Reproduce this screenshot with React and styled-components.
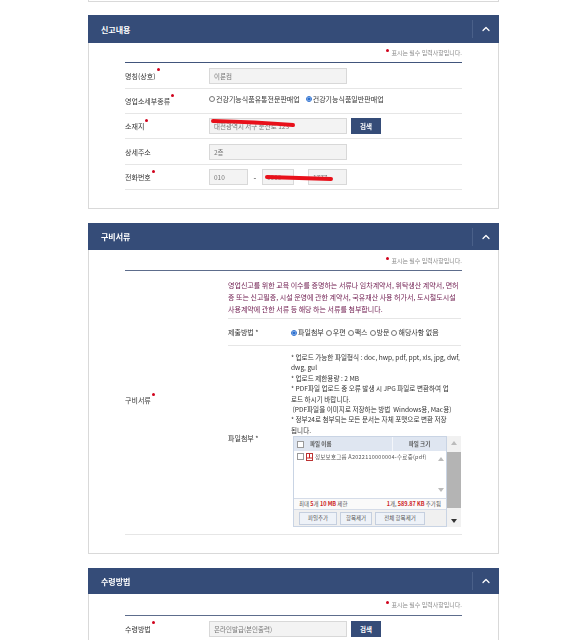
import styled, { createGlobalStyle } from "styled-components";
import { ChevronUp } from "lucide-react";

const Global = createGlobalStyle`
  html, body { margin: 0; padding: 0; background: #fff; overflow: hidden; }
  body { font-family: "Noto Sans CJK KR", "Noto Sans", sans-serif; color: #333; }
  input { font-family: inherit; }
`;

const Page = styled.div`
  width: 411px;
  height: 640px;
  margin-left: 88px;
  overflow: hidden;
  filter: blur(0.4px);
`;

const TopStub = styled.div`
  height: 1px;
  border: 1px solid #d9d9d9;
  border-top: 0;
  margin-bottom: 13px;
`;

const Panel = styled.section`
  border: 1px solid #d9d9d9;
  border-top: 0;
  margin-bottom: 14px;
  height: ${(p) => p.$height}px;
  box-sizing: border-box;
`;

const PanelHead = styled.div`
  height: ${(p) => p.$h || 28}px;
  margin: 0 -1px;
  background: #354c78;
  display: flex;
  align-items: center;
  justify-content: space-between;
  color: #fff;
  font-size: 8px;
  font-weight: 700;
  padding-left: 13px;
`;

const Toggle = styled.div`
  width: 26px;
  height: 18px;
  border-left: 1px solid #4a6089;
  display: flex;
  align-items: center;
  justify-content: center;
`;

const Inner = styled.div`
  position: relative;
  margin: 0 36px;
`;

const Note = styled.div`
  height: ${(p) => p.$h || 19}px;
  display: flex;
  justify-content: flex-end;
  align-items: center;
  font-size: 6px;
  color: #8a8a8a;
  border-bottom: ${(p) => (p.$soft ? "1px solid #5d6d8c" : "1px solid #41557c")};
`;

const Star = styled.i`
  display: inline-block;
  width: 3px;
  height: 3px;
  border-radius: 50%;
  background: #d0021b;
  margin: 0 2px ${(p) => (p.$raised ? 12 : 4)}px 1px;
`;

const Row = styled.div`
  display: flex;
  align-items: center;
  min-height: ${(p) => p.$h || 25}px;
  box-sizing: border-box;
  border-bottom: 1px solid #e6e6e6;
`;

const Label = styled.div`
  width: 84px;
  flex: none;
  display: flex;
  align-items: center;
  margin-bottom: ${(p) => p.$lift || 0}px;
  font-size: 7px;
  color: #333;
`;

const Value = styled.div`
  display: flex;
  align-items: center;
  margin-bottom: ${(p) => p.$lift || 0}px;
  font-size: 7px;
  color: #333;
`;

const Field = styled.input`
  box-sizing: border-box;
  width: ${(p) => p.$w || 138}px;
  height: 16px;
  padding: 0 4px;
  border: 1px solid #d8d8d8;
  background: #f3f3f3;
  font-size: 6.5px;
  color: #777;
  outline: 0;
`;

const SearchBtn = styled.button`
  width: 30px;
  height: 16px;
  margin-left: 4px;
  padding: 0;
  border: 0;
  background: #354c78;
  color: #fff;
  font-family: inherit;
  font-size: 6.5px;
  font-weight: 700;
`;

const Dash = styled.span`
  width: 14px;
  text-align: center;
  font-size: 8px;
`;

const Radio = styled.input.attrs({ type: "radio" })`
  width: 6px;
  height: 6px;
  margin: 1px 1px 0 0;
  accent-color: #2a6fd0;
`;

const RadioText = styled.span`
  margin-right: ${(p) => p.$mr || 0}px;
  white-space: nowrap;
  color: #333;
`;

const Scribble = styled.svg`
  position: absolute;
  left: 0;
  top: 0;
  pointer-events: none;
`;

const DocsGrid = styled.div`
  display: flex;
  align-items: center;
  border-bottom: 1px solid #e6e6e6;
`;

const DocsBody = styled.div`
  width: 233px;
  margin-left: 19px;
`;

const Guide = styled.p`
  margin: 0;
  padding: 8px 0 3px;
  font-size: 7px;
  line-height: 12px;
  white-space: nowrap;
  color: #6e1b4e;
  border-bottom: 1px solid #e6e6e6;
`;

const SubRow = styled.div`
  display: flex;
  align-items: center;
  min-height: ${(p) => p.$h}px;
  border-top: ${(p) => (p.$line ? "1px solid #e6e6e6" : 0)};
`;

const SubLabel = styled.div`
  width: 63px;
  flex: none;
  margin-bottom: ${(p) => p.$lift || 0}px;
  font-size: 7px;
  color: #333;
`;

const UploadCol = styled.div`
  width: 170px;
  padding-top: 6px;
`;

const Rules = styled.div`
  font-size: 6.6px;
  line-height: 10.4px;
  white-space: nowrap;
  color: #333;
`;

const Uploader = styled.div`
  display: flex;
  width: 168px;
  height: 91px;
  margin: 1px 0 7px 2px;
`;

const UpBox = styled.div`
  width: 154px;
  border: 1px solid #c9d4e4;
  box-sizing: border-box;
  display: flex;
  flex-direction: column;
  font-size: 5.5px;
  color: #555;
`;

const UpHead = styled.div`
  height: 14px;
  display: grid;
  grid-template-columns: 12px 86px 1fr;
  align-items: center;
  background: #dfe6f1;
  font-weight: 700;
`;

const HeadCell = styled.div`
  height: 100%;
  display: flex;
  align-items: center;
  justify-content: ${(p) => (p.$center ? "center" : "flex-start")};
  padding-left: ${(p) => (p.$center ? 0 : 4)}px;
  border-left: ${(p) => (p.$line ? "1px solid #f4f6fa" : 0)};
`;

const Check = styled.span`
  width: 5px;
  height: 5px;
  margin-left: 3px;
  border: 1px solid #999;
  background: #fff;
  flex: none;
`;

const UpList = styled.div`
  height: 48px;
  flex: none;
  box-sizing: border-box;
  display: flex;
  justify-content: space-between;
  border-bottom: 1px solid #d5dce8;
  background: #fff;
`;

const FileLine = styled.div`
  height: 11px;
  display: flex;
  align-items: center;
  gap: 2px;
  letter-spacing: 0.25px;
  white-space: nowrap;
  overflow: hidden;
`;

const MiniScroll = styled.div`
  width: 11px;
  display: flex;
  flex-direction: column;
  justify-content: space-between;
  align-items: center;
  padding: 1px 0 2px;
`;

const UpStatus = styled.div`
  height: 10px;
  flex: none;
  display: flex;
  justify-content: space-between;
  align-items: center;
  padding: 0 5px;
  background: #fafafa;
  border-bottom: 1px solid #d5dce8;
`;

const Red = styled.b`
  color: #c22;
`;

const UpButtons = styled.div`
  flex: 1;
  display: flex;
  align-items: center;
  gap: 3px;
  padding-left: 5px;
  background: #f0f0f0;
`;

const UpButton = styled.div`
  height: 11px;
  width: ${(p) => p.$w}px;
  border: 1px solid #c5cfdf;
  background: #eef2f8;
  display: flex;
  align-items: center;
  justify-content: center;
`;

const OuterScroll = styled.div`
  width: 14px;
  background: #f1f1f1;
  display: flex;
  flex-direction: column;
  align-items: center;
`;

const ScrollThumb = styled.div`
  width: 100%;
  height: 56px;
  margin: 3px 0 auto;
  background: #b4b4b4;
`;

const Arrow = styled.i`
  width: 0;
  height: 0;
  margin: 5px 0 4px;
  border-left: 3px solid transparent;
  border-right: 3px solid transparent;
  ${(p) => (p.$down ? `border-top: 4px solid ${p.$c};` : `border-bottom: 4px solid ${p.$c};`)}
`;

const Req = () => <Star $raised />;

const SectionHead = ({ title, h }) => (
  <PanelHead $h={h}>
    {title}
    <Toggle>
      <ChevronUp size={12} strokeWidth={2.5} color="#fff" />
    </Toggle>
  </PanelHead>
);

const NoteLine = ({ h, soft }) => (
  <Note $h={h} $soft={soft}>
    <Star />표시는 필수 입력사항입니다.
  </Note>
);

const App = () => {
  return (
    <Page>
      <Global />
      <TopStub />

      <Panel $height={194}>
        <SectionHead title="신고내용" />
        <Inner>
          <NoteLine />
          <Row $h={26}>
            <Label>명칭(상호)<Req /></Label>
            <Value><Field readOnly value="이룬컴" /></Value>
          </Row>
          <Row>
            <Label>영업소세부종류<Req /></Label>
            <Value $lift={5}>
              <Radio name="kind" readOnly />
              <RadioText $mr={6}>건강기능식품유통전문판매업</RadioText>
              <Radio name="kind" defaultChecked />
              <RadioText>건강기능식품일반판매업</RadioText>
            </Value>
          </Row>
          <Row>
            <Label>소재지<Req /></Label>
            <Value>
              <Field readOnly value="대전광역시 서구 둔산로 123" />
              <SearchBtn>검색</SearchBtn>
            </Value>
          </Row>
          <Row $h={26}>
            <Label>상세주소</Label>
            <Value><Field readOnly value="2층" /></Value>
          </Row>
          <Row>
            <Label>전화번호<Req /></Label>
            <Value>
              <Field $w={39} readOnly value="010" />
              <Dash>-</Dash>
              <Field $w={32} readOnly value="0000" />
              <Dash>-</Dash>
              <Field $w={39} readOnly value="1777" />
            </Value>
          </Row>
          <Scribble width="340" height="150">
            <path d="M88 78 Q130 79 168 82" stroke="#e8101a" strokeWidth="4" strokeLinecap="round" fill="none" />
            <path d="M142 134 Q170 135 206 136" stroke="#e8101a" strokeWidth="4" strokeLinecap="round" fill="none" />
          </Scribble>
        </Inner>
      </Panel>

      <Panel $height={331}>
        <SectionHead title="구비서류" h={27} />
        <Inner>
          <NoteLine h={20} soft />
          <DocsGrid>
            <Label $lift={5}>구비서류<Req /></Label>
            <DocsBody>
              <Guide>
                영업신고를 위한 교육 이수를 증명하는 서류나 임차계약서, 위탁생산 계약서, 면허<br />
                증 또는 신고필증, 시설 운영에 관한 계약서, 국유재산 사용 허가서, 도시철도시설<br />
                사용계약에 관한 서류 등 해당 하는 서류를 첨부합니다.
              </Guide>
              <SubRow $h={26}>
                <SubLabel>제출방법 *</SubLabel>
                <Value>
                  <Radio name="send" defaultChecked />
                  <RadioText $mr={2}>파일첨부</RadioText>
                  <Radio name="send" />
                  <RadioText $mr={2}>우편</RadioText>
                  <Radio name="send" />
                  <RadioText $mr={2}>팩스</RadioText>
                  <Radio name="send" />
                  <RadioText $mr={2}>방문</RadioText>
                  <Radio name="send" />
                  <RadioText>해당사항 없음</RadioText>
                </Value>
              </SubRow>
              <SubRow $h={188} $line>
                <SubLabel $lift={5}>파일첨부 *</SubLabel>
                <UploadCol>
                  <Rules>
                    * 업로드 가능한 파일형식 : doc, hwp, pdf, ppt, xls, jpg, dwf,<br />
                    dwg, gul<br />
                    * 업로드 제한용량 : 2 MB<br />
                    * PDF파일 업로드 중 오류 발생 시 JPG 파일로 변환하여 업<br />
                    로드 하시기 바랍니다.<br />
                    &nbsp;(PDF파일을 이미지로 저장하는 방법&nbsp; Windows용, Mac용)<br />
                    * 정부24로 첨부되는 모든 문서는 자체 포맷으로 변환 저장<br />
                    됩니다.
                  </Rules>
                  <Uploader>
                    <UpBox>
                      <UpHead>
                        <Check />
                        <HeadCell>파일 이름</HeadCell>
                        <HeadCell $line $center>파일 크기</HeadCell>
                      </UpHead>
                      <UpList>
                        <FileLine>
                          <Check />
                          <svg width="7" height="8" viewBox="0 0 7 8">
                            <rect x="0.5" y="0.5" width="6" height="7" fill="#fff" stroke="#b33" />
                            <path d="M1 5h5M3.5 1v4" stroke="#c22" />
                          </svg>
                          정보보호그룹 A2022110000004-수료증(pdf)
                        </FileLine>
                        <MiniScroll>
                          <Arrow $c="#bbb" />
                          <Arrow $down $c="#bbb" />
                        </MiniScroll>
                      </UpList>
                      <UpStatus>
                        <span>최대 <Red>5</Red>개 <Red>10 MB</Red> 제한</span>
                        <span><Red>1</Red>개, <Red>589.87 KB</Red> 추가됨</span>
                      </UpStatus>
                      <UpButtons>
                        <UpButton $w={36}>파일추가</UpButton>
                        <UpButton $w={30}>항목제거</UpButton>
                        <UpButton $w={48}>전체 항목제거</UpButton>
                      </UpButtons>
                    </UpBox>
                    <OuterScroll>
                      <Arrow $c="#bbb" />
                      <ScrollThumb />
                      <Arrow $down $c="#333" />
                    </OuterScroll>
                  </Uploader>
                </UploadCol>
              </SubRow>
            </DocsBody>
          </DocsGrid>
        </Inner>
      </Panel>

      <Panel $height={120}>
        <SectionHead title="수령방법" h={26} />
        <Inner>
          <NoteLine h={21} soft />
          <Row $h={26}>
            <Label>수령방법<Req /></Label>
            <Value>
              <Field readOnly value="온라인발급(본인출력)" />
              <SearchBtn>검색</SearchBtn>
            </Value>
          </Row>
        </Inner>
      </Panel>
    </Page>
  );
};

export default App;
